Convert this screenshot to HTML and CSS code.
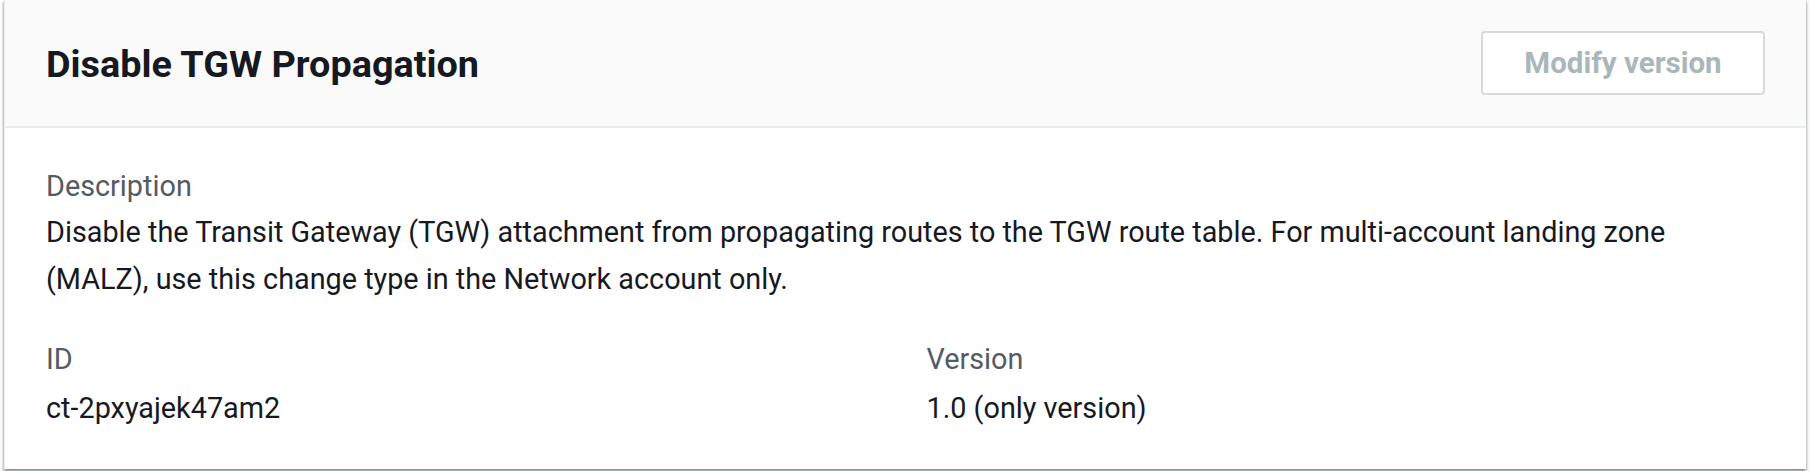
FILE: index.html
```html
<!DOCTYPE html>
<html lang="en">
<head>
<meta charset="utf-8">
<title>Disable TGW Propagation</title>
<link rel="stylesheet" href="styles.css">
</head>
<body>
<div class="page">
  <section class="card">
    <header class="card-header">
      <h2 class="title">Disable TGW Propagation</h2>
      <button class="btn" disabled>Modify version</button>
    </header>
    <div class="card-body">
      <div class="field">
        <div class="label">Description</div>
        <div class="value">Disable the Transit Gateway (TGW) attachment from propagating routes to the TGW route table. For multi-account landing zone (MALZ), use this change type in the Network account only.</div>
      </div>
      <div class="columns">
        <div class="field">
          <div class="label">ID</div>
          <div class="value">ct-2pxyajek47am2</div>
        </div>
        <div class="field">
          <div class="label">Version</div>
          <div class="value">1.0 (only version)</div>
        </div>
      </div>
    </div>
  </section>
</div>
</body>
</html>
```
FILE: styles.css
```css
html, body {
  margin: 0;
  padding: 0;
  background: #ffffff;
}
body {
  font-family: Roboto, "Liberation Sans", Arial, sans-serif;
  color: #16191f;
}
.page {
  padding: 0 4px 2px 4px;
}
.card {
  background: #ffffff;
  border-left: 1px solid #eaeded;
  box-shadow: 0 2px 2px 0 rgba(0, 28, 36, 0.3), 2px 2px 2px 0 rgba(0, 28, 36, 0.15), -2px 2px 2px 0 rgba(0, 28, 36, 0.15);
}
.card-header {
  height: 128px;
  box-sizing: border-box;
  background: #fafafa;
  border-bottom: 2px solid #eaeded;
  display: flex;
  align-items: center;
  justify-content: space-between;
  padding: 0 41px 0 41px;
}
.title {
  margin: 0;
  font-size: 37.8px;
  font-weight: 700;
  line-height: 44px;
  color: #16191f;
  padding-top: 2px;
}
.btn {
  width: 284px;
  height: 64px;
  background: #ffffff;
  border: 2px solid #d5dbdb;
  border-radius: 4px;
  font-family: inherit;
  font-size: 29.5px;
  font-weight: 700;
  color: #aab7b8;
  padding: 0;
}
.card-body {
  padding: 35px 41px 37px 41px;
}
.label {
  font-size: 28.8px;
  line-height: 46px;
  color: #545b64;
}
.value {
  font-size: 28.8px;
  line-height: 47px;
  color: #16191f;
}
.columns {
  display: grid;
  grid-template-columns: 1fr 1fr;
  column-gap: 42px;
  margin-top: 33px;
}
.columns .value {
  margin-top: 3px;
}
```
